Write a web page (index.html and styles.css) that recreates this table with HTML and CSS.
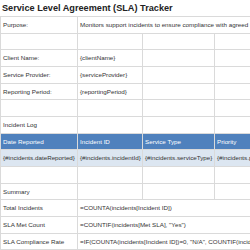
FILE: index.html
```html
<!DOCTYPE html>
<html>
<head>
<meta charset="utf-8">
<link rel="stylesheet" href="styles.css">
</head>
<body>
<div class="title">Service Level Agreement (SLA) Tracker</div>
<div class="sheet">
  <div class="c">Purpose:</div>
  <div class="c span">Monitors support incidents to ensure compliance with agreed service levels</div>

  <div class="c"></div><div class="c"></div><div class="c"></div><div class="c"></div>

  <div class="c">Client Name:</div><div class="c">{clientName}</div><div class="c"></div><div class="c"></div>
  <div class="c">Service Provider:</div><div class="c">{serviceProvider}</div><div class="c"></div><div class="c"></div>
  <div class="c">Reporting Period:</div><div class="c">{reportingPeriod}</div><div class="c"></div><div class="c"></div>

  <div class="c"></div><div class="c"></div><div class="c"></div><div class="c"></div>

  <div class="c">Incident Log</div><div class="c"></div><div class="c"></div><div class="c"></div>

  <div class="c hd">Date Reported</div><div class="c hd">Incident ID</div><div class="c hd">Service Type</div><div class="c hd">Priority</div>
  <div class="c dt">{#incidents.dateReported}</div><div class="c dt">{#incidents.incidentId}</div><div class="c dt">{#incidents.serviceType}</div><div class="c dt">{#incidents.priority}</div>

  <div class="c"></div><div class="c"></div><div class="c"></div><div class="c"></div>

  <div class="c">Summary</div><div class="c"></div><div class="c"></div><div class="c"></div>

  <div class="c">Total Incidents</div>
  <div class="c span">=COUNTA(incidents[Incident ID])</div>
  <div class="c">SLA Met Count</div>
  <div class="c span">=COUNTIF(incidents[Met SLA], "Yes")</div>
  <div class="c">SLA Compliance Rate</div>
  <div class="c span">=IF(COUNTA(incidents[Incident ID])=0, "N/A", COUNTIF(incidents[Met SLA], "Yes")/COUNTA(incidents[Incident ID]))</div>
</div>
</body>
</html>
```
FILE: styles.css
```css
html, body {
  margin: 0;
  padding: 0;
  overflow: hidden;
  background: #fff;
}
body {
  font-family: "Liberation Sans", Arial, sans-serif;
  color: #333;
  width: 250px;
  height: 250px;
}
.title {
  height: 16px;
  line-height: 16px;
  padding-left: 2px;
  font-size: 9.17px;
  font-weight: bold;
  color: #222;
  white-space: nowrap;
}
.sheet {
  display: grid;
  grid-template-columns: 77px 65px 72px 80px;
  grid-auto-rows: 16.667px;
  border-top: 1px solid #dadada;
  border-left: 1px solid #dadada;
  width: max-content;
}
.c {
  box-sizing: border-box;
  border-right: 1px solid #dadada;
  border-bottom: 1px solid #dadada;
  font-size: 6.25px;
  line-height: 15.667px;
  padding-left: 2px;
  white-space: nowrap;
  overflow: hidden;
}
.span {
  grid-column: span 3;
}
.hd {
  background: #4f81bd;
  color: #fff;
}
.dt {
  background: #dce6f1;
}
```
